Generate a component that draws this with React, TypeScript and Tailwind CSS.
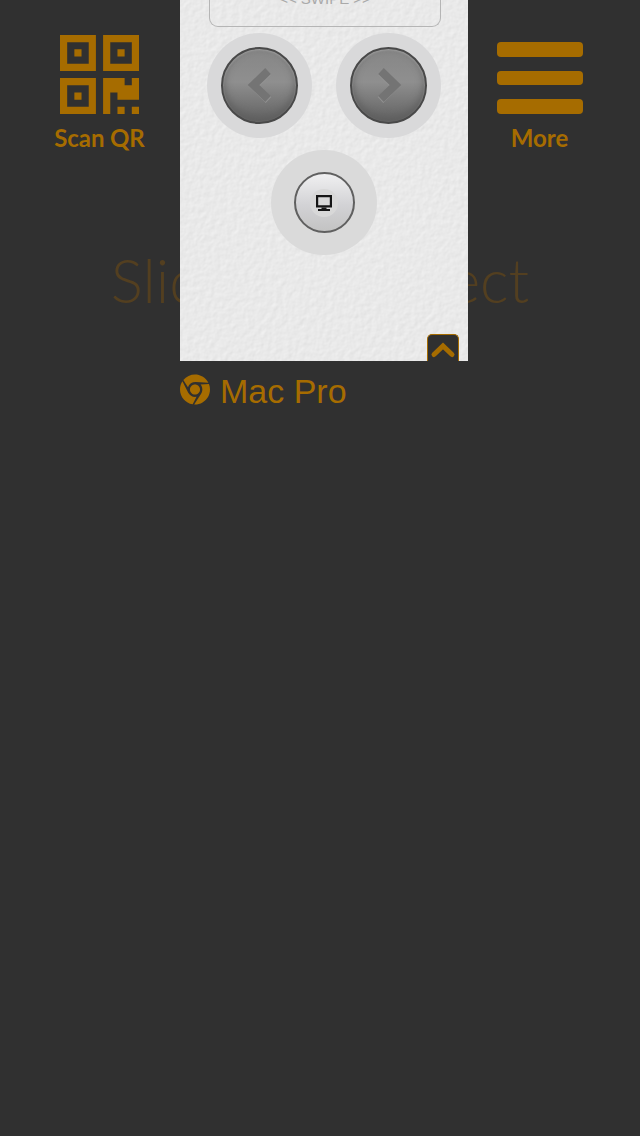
import React from "react";
import { FaChrome } from "react-icons/fa";

function QrIcon() {
  return (
    <svg className="block h-[79px] w-[79px]" viewBox="0 0 11 11" fill="#a66c00" fillRule="evenodd" aria-hidden="true">
      <path d="M0 0h5v5H0zM1 1v3h3V1zM2 2h1v1H2z" />
      <path d="M6 0h5v5H6zM7 1v3h3V1zM8 2h1v1H8z" />
      <path d="M0 6h5v5H0zM1 7v3h3V7zM2 8h1v1H2z" />
      <path d="M6 6h3v1h1V6h1v3H8V8H7v3H6zM8 10h1v1H8zM10 10h1v1h-1z" />
    </svg>
  );
}

function PaperTexture() {
  return (
    <svg className="absolute inset-0 h-full w-full" aria-hidden="true">
      <filter id="paper" x="0" y="0" width="100%" height="100%" colorInterpolationFilters="sRGB">
        <feTurbulence type="fractalNoise" baseFrequency="0.18" numOctaves="3" seed="4" result="noise" />
        <feDiffuseLighting in="noise" surfaceScale="0.13" diffuseConstant="1.17" lightingColor="#ebebeb">
          <feDistantLight azimuth="225" elevation="58" />
        </feDiffuseLighting>
      </filter>
      <rect width="100%" height="100%" filter="url(#paper)" />
    </svg>
  );
}

function ArrowButton({ direction }: { direction: "left" | "right" }) {
  return (
    <button className="flex h-[105px] w-[105px] items-center justify-center rounded-full bg-[#d9d9da]" aria-label={direction}>
      <span className="flex h-[77px] w-[77px] items-center justify-center rounded-full border-2 border-[#494949] bg-linear-to-b from-[#868686] via-[#8f8f8f] via-45% to-[#626262] shadow-[inset_0_1px_2px_#a0a0a0,inset_0_-4px_8px_#5e5e5e]">
        <svg className={direction === "left" ? "-mt-[2px] h-[38px] w-[26px]" : "-mt-[2px] h-[38px] w-[26px] -scale-x-100"} viewBox="0 0 26 38" fill="none">
          <path d="M21 5 6.500 19 21 33" transform="translate(0.500 1)" stroke="#929292" strokeWidth="8" />
          <path d="M21 5 6.500 19 21 33" stroke="#747474" strokeWidth="8" />
        </svg>
      </span>
    </button>
  );
}

function ScreenButton() {
  return (
    <button className="flex h-[105px] w-[106px] items-center justify-center rounded-full bg-[#dadada]" aria-label="screen">
      <span className="flex h-[61px] w-[61px] items-center justify-center rounded-full border-2 border-[#606060] bg-linear-to-b from-[#f0f0f1] via-[#d2d2d5] via-55% to-[#c3c3c3]">
        <span className="flex h-7 w-7 items-center justify-center rounded-full bg-[#d8d8d8]">
          <svg className="h-[18px] w-[18px]" viewBox="0 0 18 18">
            <path d="M1 1h16v12.500H1zM3.200 3.200v8h11.600v-8z" fill="#151515" fillRule="evenodd" />
            <path d="M6.500 13.500h5V15H15v2H3v-2h3.500z" fill="#151515" />
          </svg>
        </span>
      </span>
    </button>
  );
}

export default function App() {
  return (
    <main className="relative h-[1136px] w-[640px] overflow-hidden bg-[#303030] text-[#a66c00]">
      <p className="absolute top-[244px] left-0 w-full text-center font-['Lato'] text-[60.3px] leading-[72px] font-light whitespace-nowrap text-[#533f20]">
        Slide to connect
      </p>
      <div className="relative grid grid-cols-[180px_288px_172px]">
        <button className="flex flex-col items-center self-start pt-[35px] pl-[19px] font-['Lato'] text-[24px] leading-[29px] font-bold tracking-[-0.1px]">
          <QrIcon />
          <span className="mt-[9px]">Scan QR</span>
        </button>
        <section className="relative h-[361px] overflow-hidden bg-[#e9e9e9]">
          <PaperTexture />
          <div className="relative flex h-full flex-col items-center">
            <div className="ml-[2px] flex h-[27px] w-[232px] justify-center overflow-hidden rounded-b-[9px] border border-t-0 border-[#b5b5b5] font-['Liberation_Sans'] text-[15px] leading-[17px] text-[#aaaaaa]">
              <span className="-mt-[10px]">&lt;&lt; SWIPE &gt;&gt;</span>
            </div>
            <div className="mt-[6px] flex w-[234px] justify-between">
              <ArrowButton direction="left" />
              <ArrowButton direction="right" />
            </div>
            <div className="mt-[12px]">
              <ScreenButton />
            </div>
            <button className="mt-auto mr-[9px] flex h-[27px] w-[32px] justify-center self-end rounded-t-[5px] border border-b-0 border-[#a66c00] bg-[#303030] pt-[6px]" aria-label="collapse">
              <svg className="h-[18px] w-[26px]" viewBox="0 0 26 18" fill="none">
                <path d="m4 13.500 9-8.500 9 8.500" stroke="#a66c00" strokeWidth="5" strokeLinecap="round" />
              </svg>
            </button>
          </div>
        </section>
        <button className="flex flex-col items-center self-start pt-[42px] pr-[28px] font-['Lato'] text-[24px] leading-[29px] font-bold">
          <span className="flex w-[86px] flex-col gap-[14px]">
            <span className="h-[14.5px] rounded-[4px] bg-[#a66c00]" />
            <span className="h-[14.5px] rounded-[4px] bg-[#a66c00]" />
            <span className="h-[14.5px] rounded-[4px] bg-[#a66c00]" />
          </span>
          <span className="mt-[9px] mr-px">More</span>
        </button>
      </div>
      <div className="relative flex items-center gap-[10px] pt-[9px] pl-[180px] font-['Liberation_Sans'] text-[34px] leading-[42px]">
        <FaChrome className="-mt-[3px] h-[31px] w-[30px]" />
        <span>Mac Pro</span>
      </div>
    </main>
  );
}
